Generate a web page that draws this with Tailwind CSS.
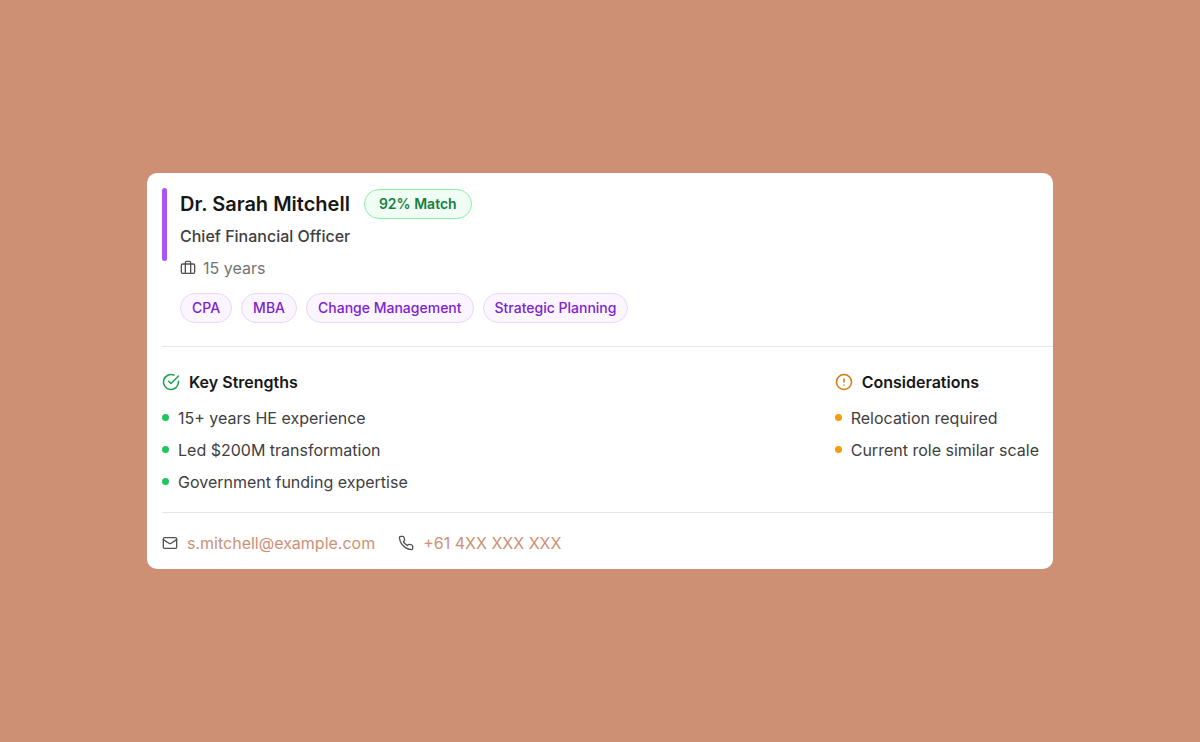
<!DOCTYPE html>
<html lang="en">
<head>
    <meta charset="UTF-8">
    <meta name="viewport" content="width=device-width, initial-scale=1.0">
    <title>Candidate Card</title>
    <script src="https://cdn.jsdelivr.net/npm/@tailwindcss/browser@4"></script>
</head>
<body class="bg-[#cd9075] font-['Inter',sans-serif] flex items-center justify-center min-h-screen p-6 text-base text-[#404040]">
    <main class="bg-white w-full max-w-[906px] rounded-[10px] pl-[15px] pt-[15px] pb-[14px]">

        <!-- Candidate summary -->
        <header class="flex items-start gap-[13px] pb-[23px]">
            <div class="w-[5px] h-[73px] rounded-full bg-[#a855f7]"></div>
            <div>
                <div class="flex items-center gap-[14px] mt-px">
                    <h1 class="text-xl font-semibold text-[#171717]">Dr. Sarah Mitchell</h1>
                    <span class="h-[30px] px-[14px] flex items-center rounded-full border border-[#86efac] bg-[#f0fdf4] text-sm font-semibold text-[#15803d]">92% Match</span>
                </div>
                <p class="mt-[5px] font-medium">Chief Financial Officer</p>
                <p class="mt-2 flex items-center gap-[7px] text-[#737373]">
                    <svg class="size-4 text-[#525252]" viewBox="0 0 24 24" fill="none" stroke="currentColor" stroke-width="2" stroke-linecap="round" stroke-linejoin="round">
                        <path d="M16 20V4a2 2 0 0 0-2-2h-4a2 2 0 0 0-2 2v16"/>
                        <rect width="20" height="14" x="2" y="6" rx="2"/>
                    </svg>
                    15 years
                </p>
                <ul class="mt-[13px] flex flex-wrap gap-[9px] text-sm font-medium text-[#7e22ce]">
                    <li class="h-[30px] px-[11px] flex items-center rounded-full border border-[#e9d5ff] bg-[#faf5ff]">CPA</li>
                    <li class="h-[30px] px-[11px] flex items-center rounded-full border border-[#e9d5ff] bg-[#faf5ff]">MBA</li>
                    <li class="h-[30px] px-[11px] flex items-center rounded-full border border-[#e9d5ff] bg-[#faf5ff]">Change Management</li>
                    <li class="h-[30px] px-[11px] flex items-center rounded-full border border-[#e9d5ff] bg-[#faf5ff]">Strategic Planning</li>
                </ul>
            </div>
        </header>

        <!-- Strengths and considerations -->
        <div class="flex justify-between gap-6 border-y border-[#e5e5e5] pt-[23px] pb-[18px] pr-[14px]">
            <section>
                <h2 class="flex items-center gap-[9px] font-semibold text-[#171717]">
                    <svg class="size-[18px] text-[#16a34a]" viewBox="0 0 24 24" fill="none" stroke="currentColor" stroke-width="2" stroke-linecap="round" stroke-linejoin="round">
                        <path d="M22 11.08V12a10 10 0 1 1-5.93-9.14"/>
                        <path d="m9 11 3 3L22 4"/>
                    </svg>
                    Key Strengths
                </h2>
                <ul class="mt-3 flex flex-col gap-2">
                    <li class="flex items-start gap-[9px]"><span class="mt-2 size-[7px] rounded-full bg-[#22c55e]"></span>15+ years HE experience</li>
                    <li class="flex items-start gap-[9px]"><span class="mt-2 size-[7px] rounded-full bg-[#22c55e]"></span>Led $200M transformation</li>
                    <li class="flex items-start gap-[9px]"><span class="mt-2 size-[7px] rounded-full bg-[#22c55e]"></span>Government funding expertise</li>
                </ul>
            </section>
            <section>
                <h2 class="flex items-center gap-[9px] font-semibold text-[#171717]">
                    <svg class="size-[18px] text-[#d97706]" viewBox="0 0 24 24" fill="none" stroke="currentColor" stroke-width="2" stroke-linecap="round" stroke-linejoin="round">
                        <circle cx="12" cy="12" r="10"/>
                        <path d="M12 8v4M12 16h.01"/>
                    </svg>
                    Considerations
                </h2>
                <ul class="mt-3 flex flex-col gap-2">
                    <li class="flex items-start gap-[9px]"><span class="mt-2 size-[7px] rounded-full bg-[#f59e0b]"></span>Relocation required</li>
                    <li class="flex items-start gap-[9px]"><span class="mt-2 size-[7px] rounded-full bg-[#f59e0b]"></span>Current role similar scale</li>
                </ul>
            </section>
        </div>

        <!-- Contact -->
        <footer class="flex flex-wrap gap-[23px] pt-[18px] text-[#cd9075]">
            <a href="mailto:s.mitchell@example.com" class="flex items-center gap-[9px]">
                <svg class="size-4 text-[#525252]" viewBox="0 0 24 24" fill="none" stroke="currentColor" stroke-width="2" stroke-linecap="round" stroke-linejoin="round">
                    <rect width="20" height="16" x="2" y="4" rx="2"/>
                    <path d="m22 7-8.97 5.7a1.94 1.94 0 0 1-2.06 0L2 7"/>
                </svg>
                s.mitchell@example.com
            </a>
            <a href="tel:+614" class="flex items-center gap-[9px]">
                <svg class="size-4 text-[#525252]" viewBox="0 0 24 24" fill="none" stroke="currentColor" stroke-width="2" stroke-linecap="round" stroke-linejoin="round">
                    <path d="M22 16.92v3a2 2 0 0 1-2.18 2 19.79 19.79 0 0 1-8.63-3.07 19.5 19.5 0 0 1-6-6 19.79 19.79 0 0 1-3.07-8.67A2 2 0 0 1 4.11 2h3a2 2 0 0 1 2 1.72 12.84 12.84 0 0 0 .7 2.81 2 2 0 0 1-.45 2.11L8.09 9.91a16 16 0 0 0 6 6l1.27-1.27a2 2 0 0 1 2.11-.45 12.84 12.84 0 0 0 2.81.7A2 2 0 0 1 22 16.92z"/>
                </svg>
                +61 4XX XXX XXX
            </a>
        </footer>
    </main>
</body>
</html>
